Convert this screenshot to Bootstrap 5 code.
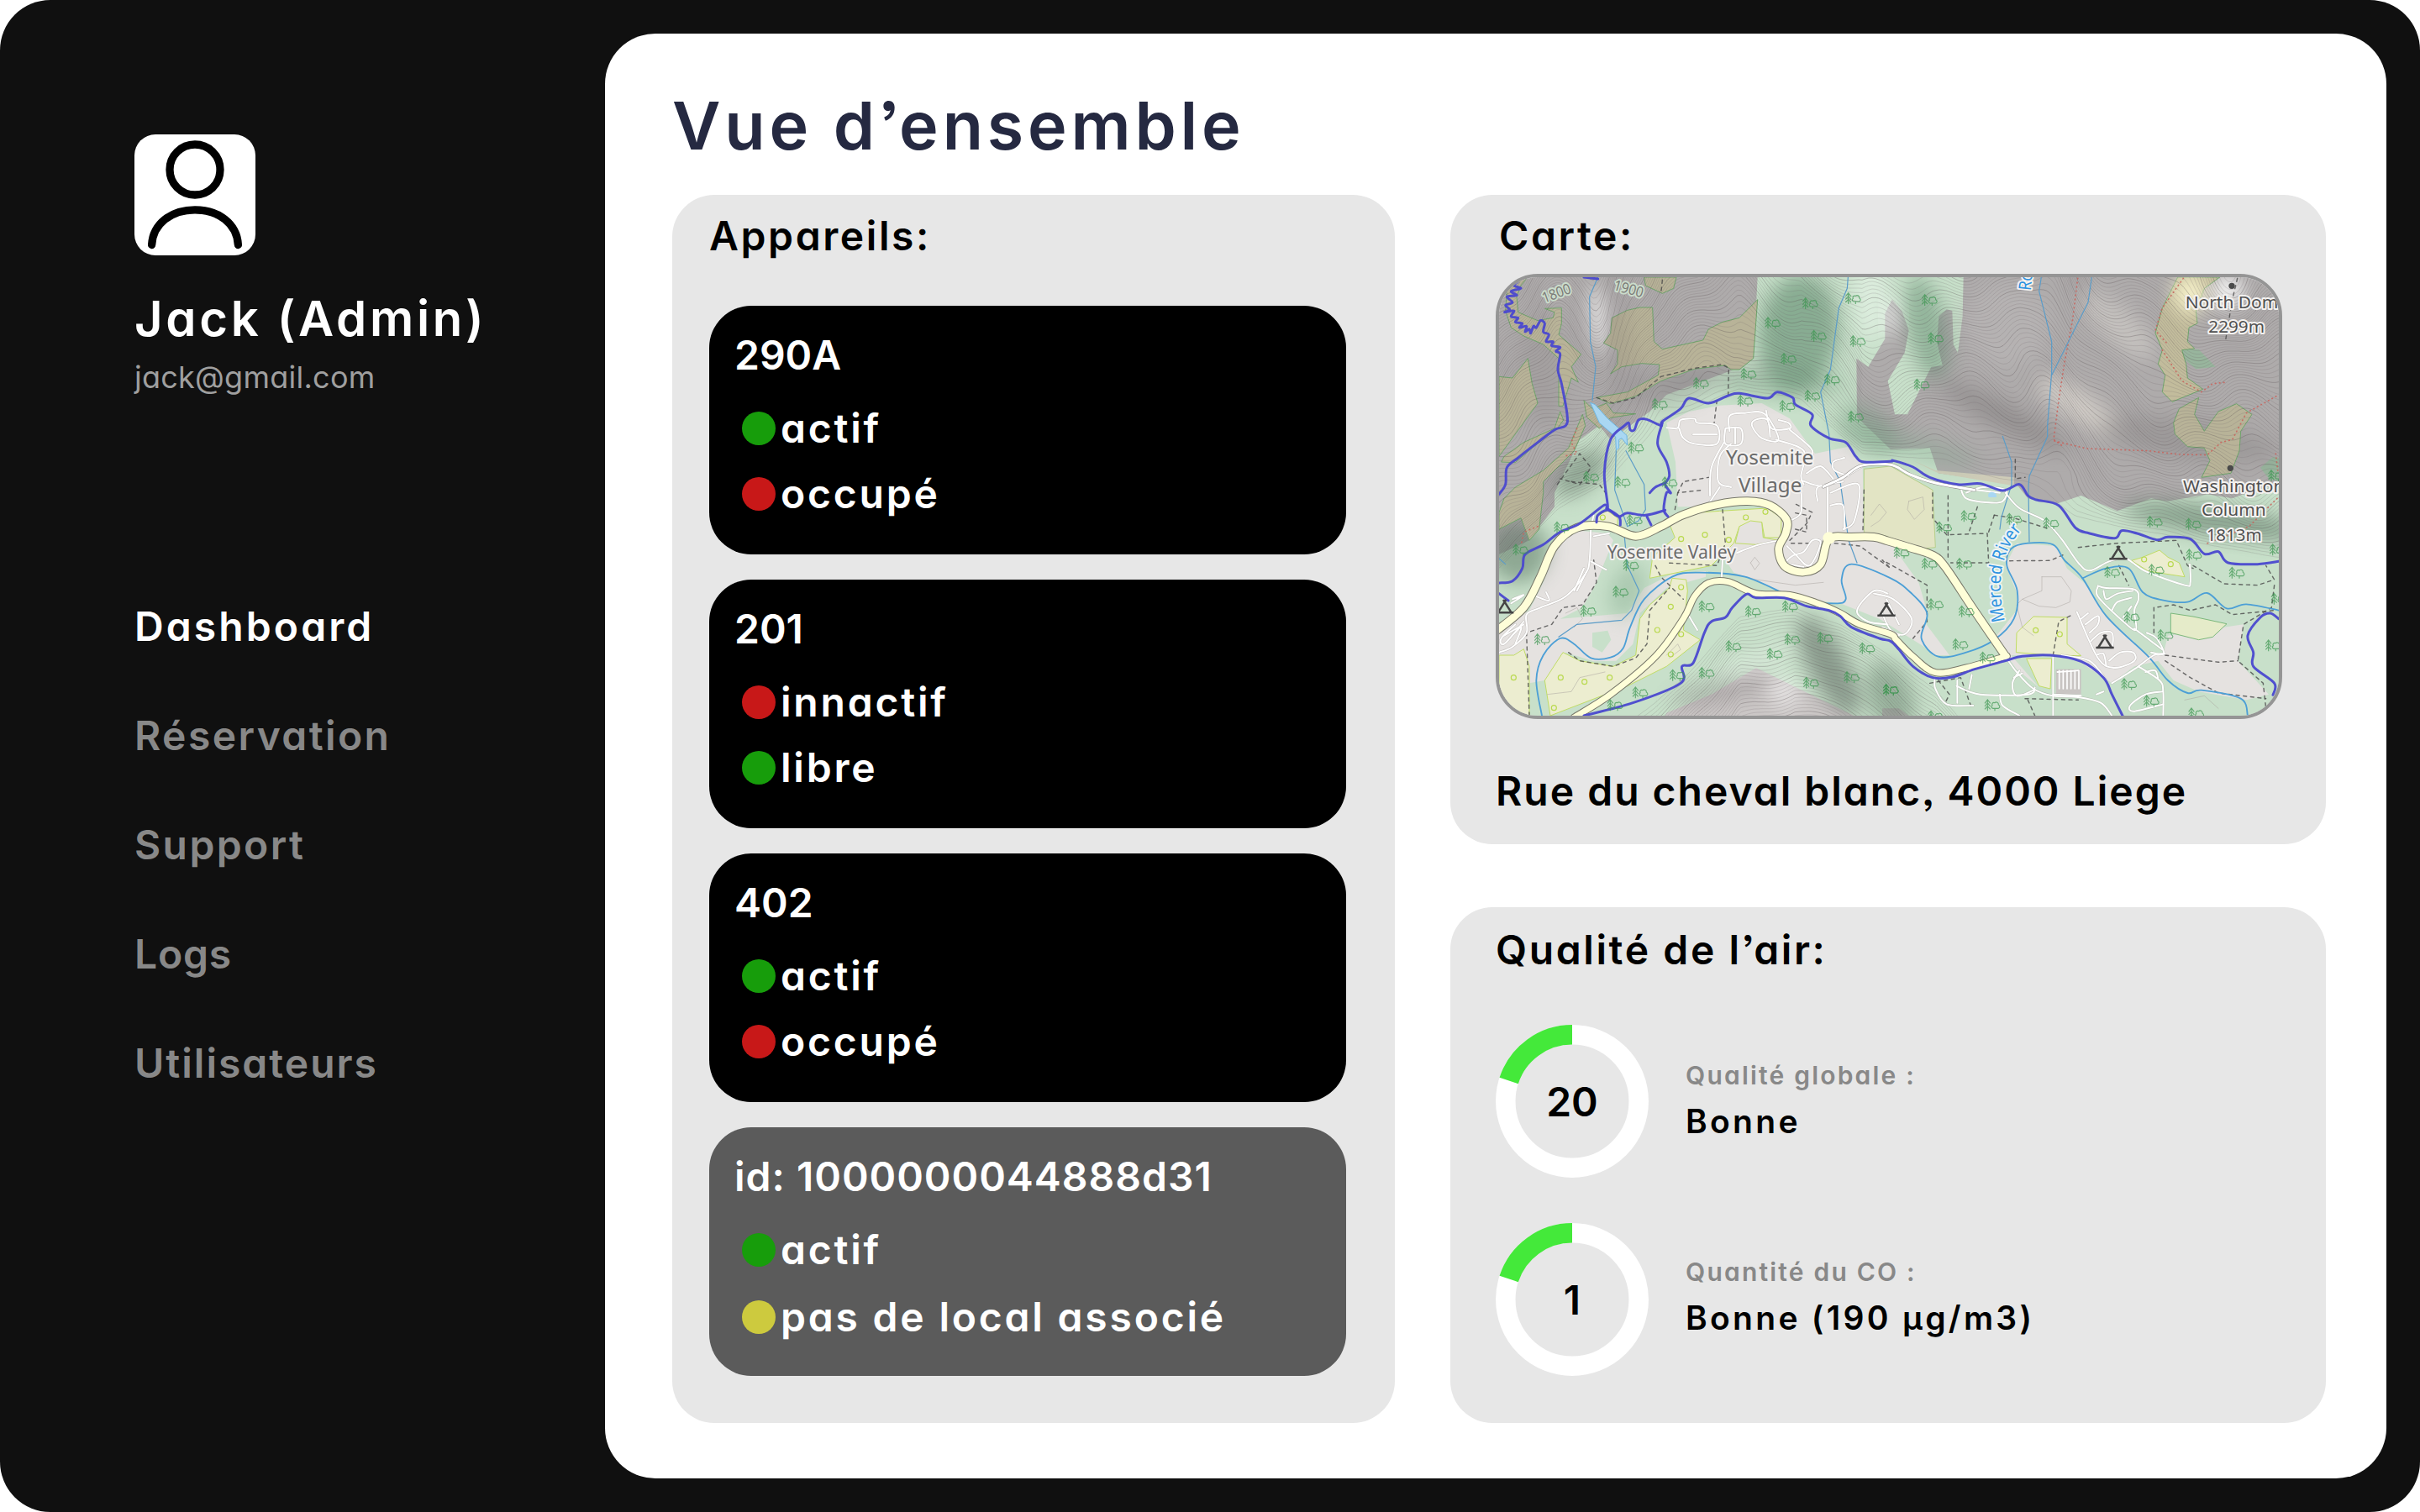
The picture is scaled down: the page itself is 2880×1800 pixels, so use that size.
<!DOCTYPE html>
<html lang="fr">
<head>
<meta charset="utf-8">
<title>Vue d’ensemble</title>
<meta name="viewport" content="width=device-width, initial-scale=1">
<link href="https://cdn.jsdelivr.net/npm/bootstrap@5.3.0/dist/css/bootstrap.min.css" rel="stylesheet">
<style>
body{background:#fff;font-family:Inter,"Open Sans",sans-serif;font-feature-settings:"cv11","ss03";color:#000}
.shell{width:2880px;height:1800px;background:#101010;border-radius:60px;padding-right:40px}
.side{width:720px;padding:160px 0 0 160px}
.avatar{width:144px;height:144px;border-radius:25px;background:#fff}
.who{font-size:58px;line-height:70px;font-weight:600;margin-top:40px;color:#fff;letter-spacing:3.7px}
.mail{font-size:36px;line-height:44px;margin-top:13px;color:#9f9f9f;letter-spacing:.25px}
.side .nav{margin-top:210px}
.side .nav-link{padding:0;font-size:48px;line-height:130px;height:130px;font-weight:600;color:#888;letter-spacing:2.4px}
.side .nav-link.active{color:#fff;letter-spacing:3.1px}
.side .nav-link:nth-child(4){letter-spacing:.8px}
.side .nav-link:nth-child(5){letter-spacing:2px}
.main-pane{width:2120px;height:1720px;border-radius:60px;background:#fff;padding:0 72px 66px 80px}
.page-title{font-size:79px;line-height:90px;font-weight:600;color:#252941;height:192px;padding-top:64px;letter-spacing:4.8px}
.board{height:1462px}
.panel{background:#e7e7e7;border-radius:50px}
.panel h2{font-size:48px;line-height:60px;font-weight:600;margin:0;letter-spacing:2.6px}
.devices{width:860px;padding:19px 58px 0 44px}
.devices h2{margin-bottom:53px}
.device-list{gap:30px}
.device{height:296px;border-radius:50px;background:#000;color:#fff;font-size:48px;line-height:60px;font-weight:600;padding:29px 30px 0}
.device.unset{background:#5b5b5b}
.stat{height:78px;padding-left:9px;gap:6px;letter-spacing:2.8px}
.stat .txt{height:60px;margin-top:-1px}
.device-name{margin-bottom:28px}
.unset .device-name{letter-spacing:1px}
.dot{width:40px;height:40px;border-radius:50%;margin-top:9px}
.ok{background:#179d0b}.ko{background:#c81818}.warn{background:#cdca3e}
.unset .stat+.stat{padding-top:2px}
.right{width:1042px}
.map-panel{height:773px;padding:19px 52px 0 54px}
.map-panel h2{padding-left:4px}
.mapbox{width:936px;height:530px;border:4px solid #959595;border-radius:50px;overflow:hidden;margin-top:15px}
.mapbox svg{display:block;width:928px;height:522px}
.addr{font-size:48px;line-height:60px;font-weight:600;margin-top:56px;letter-spacing:2px}
.air{height:614px;padding:21px 54px 0}
.air h2{margin-bottom:59px}
.ringrow{height:236px;gap:44px}
.ring{width:182px;height:182px}
.ring svg{display:block}
.val{font-size:48px;font-weight:600;line-height:60px;margin-top:1px}
.lbl{font-size:30px;line-height:36px;font-weight:600;color:#888;margin-top:42px;letter-spacing:2.2px}
.ringrow+.ringrow .lbl{margin-top:40px}
.res{font-size:39px;line-height:46px;font-weight:600;margin-top:14px;letter-spacing:3.3px}
.mtxt{font-family:"Noto Sans","Open Sans",sans-serif;paint-order:stroke;stroke:#f4f2f0;stroke-width:12;stroke-linejoin:round}
</style>
</head>
<body>
<div class="shell d-flex align-items-center">
  <aside class="side align-self-start flex-shrink-0">
    <div class="avatar"><svg class="d-block" width="144" height="144" viewBox="0 0 144 144" fill="none" stroke="#000" stroke-width="9.3" stroke-linecap="round"><circle cx="72" cy="42" r="30"/><path d="M20.6 131.5C22 106 44 89.8 72 89.8S122 106 123.4 131.5"/></svg></div>
    <div class="who">Jack (Admin)</div>
    <div class="mail">jack@gmail.com</div>
    <nav class="nav flex-column">
      <a class="nav-link active" href="#">Dashboard</a>
      <a class="nav-link" href="#">Réservation</a>
      <a class="nav-link" href="#">Support</a>
      <a class="nav-link" href="#">Logs</a>
      <a class="nav-link" href="#">Utilisateurs</a>
    </nav>
  </aside>
  <main class="main-pane">
    <h1 class="page-title m-0">Vue d’ensemble</h1>
    <div class="board d-flex justify-content-between align-items-stretch">
      <section class="panel devices">
        <h2>Appareils:</h2>
        <div class="device-list d-flex flex-column">
          <div class="device"><div class="device-name">290A</div>
            <div class="stat d-flex"><i class="dot ok"></i><span class="txt">actif</span></div>
            <div class="stat d-flex"><i class="dot ko"></i><span class="txt">occupé</span></div></div>
          <div class="device"><div class="device-name">201</div>
            <div class="stat d-flex"><i class="dot ko"></i><span class="txt">innactif</span></div>
            <div class="stat d-flex"><i class="dot ok"></i><span class="txt">libre</span></div></div>
          <div class="device"><div class="device-name">402</div>
            <div class="stat d-flex"><i class="dot ok"></i><span class="txt">actif</span></div>
            <div class="stat d-flex"><i class="dot ko"></i><span class="txt">occupé</span></div></div>
          <div class="device unset"><div class="device-name">id: 1000000044888d31</div>
            <div class="stat d-flex"><i class="dot ok"></i><span class="txt">actif</span></div>
            <div class="stat d-flex"><i class="dot warn"></i><span class="txt">pas de local associé</span></div></div>
        </div>
      </section>
      <div class="right d-flex flex-column justify-content-between">
        <section class="panel map-panel">
          <h2>Carte:</h2>
          <div class="mapbox"><svg id="map" viewBox="42 60 2784 1566"></svg></div>
          <div class="addr">Rue du cheval blanc, 4000 Liege</div>
        </section>
        <section class="panel air">
          <h2>Qualité de l’air:</h2>
          <div class="ringrow d-flex">
            <div class="ring position-relative"><svg width="182" height="182" viewBox="0 0 182 182" fill="none" stroke-width="23.5"><circle cx="91" cy="91" r="79.2" stroke="#fff"/><path d="M91 11.8A79.2 79.2 0 0 0 15.7 66.5" stroke="#44e93a"/></svg>
              <div class="val position-absolute top-50 start-50 translate-middle">20</div></div>
            <div><div class="lbl">Qualité globale :</div><div class="res">Bonne</div></div>
          </div>
          <div class="ringrow d-flex">
            <div class="ring position-relative"><svg width="182" height="182" viewBox="0 0 182 182" fill="none" stroke-width="23.5"><circle cx="91" cy="91" r="79.2" stroke="#fff"/><path d="M91 11.8A79.2 79.2 0 0 0 15.7 66.5" stroke="#44e93a"/></svg>
              <div class="val position-absolute top-50 start-50 translate-middle">1</div></div>
            <div><div class="lbl">Quantité du CO :</div><div class="res">Bonne (190 µg/m3)</div></div>
          </div>
        </section>
      </div>
    </div>
  </main>
</div>
<script src="https://cdn.jsdelivr.net/npm/bootstrap@5.3.0/dist/js/bootstrap.bundle.min.js"></script>
<script>
/* Topographic map. Points are written per tile; each tile has an origin. */
const T={1:[0,0],2:[1410,0],3:[0,810],4:[1410,810]};
let out='';
function pts(s){let o=[0,0],r=[];for(const w of s.trim().split(/\s+/)){if(w[0]==='q'){o=T[w[1]];continue}const a=w.split(',').map(Number);r.push([a[0]+o[0],a[1]+o[1]])}return r}
function path(s,smooth,closed){const p=pts(s),n=p.length;let d='M'+p[0];
 if(!smooth)return d+'L'+p.slice(1).join(' ')+(closed?'Z':'');
 const g=i=>closed?p[(i+n)%n]:p[Math.max(0,Math.min(n-1,i))];
 for(let i=0;i<(closed?n:n-1);i++){const a=g(i-1),b=g(i),c=g(i+1),e=g(i+2);
  d+=`C${[b[0]+(c[0]-a[0])/6,b[1]+(c[1]-a[1])/6,c[0]-(e[0]-b[0])/6,c[1]-(e[1]-b[1])/6,c[0],c[1]].map(v=>v.toFixed(1)).join(' ')}`}
 return d+(closed?'Z':'')}
const area=(s,fill,stroke,sm,ex)=>out+=`<path d="${path(s,sm,true)}" fill="${fill}" ${stroke?`stroke="${stroke}" stroke-width="3"`:''} ${ex||''}/>`;
const line=(s,c,w,sm=true,ex='')=>out+=`<path d="${path(s,sm)}" fill="none" stroke="${c}" stroke-width="${w}" stroke-linejoin="round" stroke-linecap="round" ${ex}/>`;
const glow=(x,y,rx,ry,c,o,rot=0)=>out+=`<ellipse cx="${x}" cy="${y}" rx="${rx}" ry="${ry}" fill="${c}" opacity="${o}" transform="rotate(${rot} ${x} ${y})" filter="url(#soft)"/>`;

out+='<defs><filter id="soft" x="-60%" y="-60%" width="220%" height="220%"><feGaussianBlur stdDeviation="34"/></filter><symbol id="tree" viewBox="0 0 60 46" overflow="visible"><path d="M14 44V4M4 17L14 4l10 13M4 28l10-13 10 13M4 38l10-11 10 11M40 44V34M33 35h20c6-3 6-10 0-13 1-8-8-12-13-7-7-3-12 3-9 9-5 3-3 10 2 11" fill="none" stroke="#3c9650" stroke-width="3.5"/></symbol></defs>';
out+='<rect x="42" y="60" width="2784" height="1566" fill="#aeabab"/>';

/* valley forest */
const G='#c8e0ca';
area('42,1050 150,1000 240,880 240,830 330,640 400,590 440,640 580,540 640,480 880,390 950,350 965,60 1700,60 1697,200 1680,330 1664,300 1660,180 1640,175 1612,200 1605,290 1625,375 1585,380 1540,470 1500,550 1455,550 1430,430 1490,330 1505,250 1480,180 1445,140 1420,190 1420,280 1360,380 1318,350 1320,560 1440,675 1580,670 1610,760 1890,800 1930,850 q4 560,50 620,60 710,30 840,85 960,40 1020,50 1160,25 1250,40 1330,10 1416,-10 1416,816 q3 42,816',G);
area('q2 1070,315 1130,318 1190,380 1120,388 1075,350','#98b59d');
area('q2 1350,740 1395,702 1416,705 1416,790 1380,780','#98b59d');

/* pale clearings and built-up ground */
const R='#e5e2e0';
area('640,580 720,540 830,518 980,510 1080,565 1170,690 1290,665 1340,730 1345,985 1440,1010 1540,1150 1572,1260 1560,1340 1640,1400 1560,1380 1400,1280 1260,1225 1100,1205 1000,1160 880,1115 830,1040 890,1000 1030,990 1050,900 960,860 780,880 680,880 672,720',R);
area('q3 330,155 430,165 450,190 390,340 340,430 260,470 500,450 560,360 660,310 780,300 780,320 640,360 545,450 520,560 460,620 380,622 280,590 205,690 150,700 42,810 42,505 150,440 200,340 250,200',R);
area('q3 375,520 430,512 442,545 410,590 375,570',G);
area('q4 440,280 480,200 620,210 660,290 725,345 800,460 950,600 1005,590 1020,530 1290,490 1270,620 1380,740 1300,760 1130,730 1040,690 985,620 900,640 820,700 700,620 600,600 460,600 560,715 480,650 400,540 480,440 482,380',R);
area('q4 150,480 240,600 180,600 140,550',R);
area('q3 640,806 800,740 960,645 1440,880 600,880','#cbc7c6');
area('q4 0,790 60,790 95,816 0,816','#c3bfbe');
area('q4 110,-95 190,-60 470,-35 470,-5 200,-50','#cfccb8');
/* relief shading */
glow(400,210,45,120,'#fff',.5,-8);glow(2110,520,170,50,'#e4dfd6',.65,35);glow(2640,110,60,60,'#fff',.85);glow(1370,120,60,170,'#edf8ee',.55);glow(1450,200,25,70,'#fff',.7);glow(2250,230,170,60,'#dbd8d2',.5,42);glow(1850,230,160,150,'#bdbaba',.5);
glow(1850,560,260,45,'#6e6b6b',.4,28);glow(2500,640,330,70,'#7d7979',.35,8);glow(1110,260,140,210,'#5f8a6d',.6,6);glow(1060,440,230,50,'#5f8a6d',.3,0);glow(1570,240,70,190,'#5f8a6d',.5,-12);glow(1360,600,120,70,'#6f9a7d',.4,40);glow(330,760,110,60,'#5d7363',.5,-40);glow(200,400,90,200,'#7e7a7a',.2);glow(700,450,150,60,'#777',.25,-25);
glow(1220,1450,70,200,'#4f5a52',.5,-28);glow(830,1540,180,40,'#8c8788',.4,-12);glow(950,1440,150,30,'#fff',.3,-20);glow(1060,1540,50,60,'#fff',.5,-30);glow(110,1040,110,110,'#54715d',.5);glow(2600,930,330,50,'#54715d',.55,8);glow(1440,1560,80,130,'#4f6a56',.4,-20);glow(1500,660,260,40,'#7da489',.4,14);glow(500,1180,60,100,'#8fb298',.5,20);glow(740,420,330,30,'#777',.2,-8);

/* scrub */
const K='#b8b398',KS='#6ea56b';
['440,405 465,370 465,320 415,295 440,260 445,205 500,178 545,168 590,168 595,290 625,317 770,285 790,245 840,220 900,205 965,140 950,350 900,390 870,390 850,375 740,388 620,430 530,485 440,512 390,490 500,470 610,410 615,372 550,368 480,380',
'560,60 675,60 665,100 625,118 565,90',
'90,70 140,64 120,90 105,130 110,185 180,215 235,205 240,185 205,172 265,170 265,225 255,265 335,335 300,380 325,435 300,420 270,520 255,520 255,350 200,300 130,270 85,240 65,180 70,110',
'42,415 90,420 145,350 160,440 180,510 42,700',
'260,540 272,570 250,600 160,670 100,722 50,720 60,700 130,650 240,600',
'345,500 375,530 425,510 450,545 530,548 440,562 400,600 355,560',
'42,900 60,850 100,810 200,750 290,670 340,550 350,590 310,680 200,790 q3 200,20 185,150 150,190 120,110 42,150',
'q2 1130,490 1115,550 1150,610 1175,575 1200,540 1265,512 1320,550 1280,610 1275,680 1245,760 1140,775 1170,715 1150,670 1090,665 1045,620 1040,580 1060,530'].forEach(s=>area(s,K,KS));
area('q2 1055,60 1205,60 1150,100 1120,180 1125,225 1095,240 1090,290 1115,315 1070,320 1085,370 1090,420 1145,460 1035,505 1000,470 1010,410 985,370 1000,320 975,260 1000,170','#c2bc9c',KS);
glow(2510,120,60,70,'#fbf6cf',.9);

/* fields and heath */
const H='#ecedd0',HS='#c0dc66';
['q3 650,130 690,95 830,85 1000,75 1050,110 1048,180 990,180 980,125 900,140 880,200 800,280 580,325 590,250 670,180',
'q3 205,690 270,590 330,620 450,640 530,600 545,470 580,420 650,360 660,325 710,330 715,370 700,510 760,545 640,640 500,710 225,816',
'q3 42,600 95,600 130,578 150,640 150,816 42,816',
'q3 390,100 430,85 465,110 465,135 390,125',
'q4 478,590 480,520 540,462 660,465 660,560 710,602 600,600',
'q4 515,612 605,612 600,720 560,710','q4 890,262 930,250 990,225 1020,250 1060,270 1080,320 950,300'].forEach(s=>area(s,H,HS));
area('q3 985,180 980,125 940,120 900,140 885,200 960,205 1040,190',R,HS);
area('1345,745 1440,735 1590,820 q4 190,215 140,220 0,170 q3 1345,170','#e2e4c4','#b7cf8b');
area('q4 1030,450 1110,462 1230,488 1180,535 1130,545 1030,520','#e5ebc9','#7cb87c');
out+='<rect x="2030" y="1460" width="90" height="90" fill="#c9c5c3"/>';

/* contour lines traced over a height field */
(()=>{const rim=[[0,1150],[250,900],[430,800],[620,600],[900,470],[1120,510],[1340,700],[1640,730],[1900,820],[2100,930],[2500,1010],[2900,1090]];
 const south=[[0,2000],[500,1640],[700,1480],[900,1260],[1100,1230],[1260,1290],[1420,1390],[1600,1520],[1750,1700],[2900,2400]];
 const ip=(t,x)=>{for(let i=1;i<t.length;i++)if(x<=t[i][0]){const a=t[i-1],b=t[i];return a[1]+(b[1]-a[1])*(x-a[0])/(b[0]-a[0])}return t[t.length-1][1]};
 const W=(x,y)=>34*Math.sin(x/83+y/140)+22*Math.sin(x/37-y/91)+46*Math.sin(x/190+1);
 const h=(x,y)=>{const a=ip(rim,x)-y,b=y-ip(south,x);
  let v=0;if(a>0)v=a+W(x,y)*Math.min(1,a/160)+130*Math.exp(-((x-2640)**2+(y-130)**2)/26000)+260*Math.exp(-((x-400)**2)/9000)*Math.min(1,a/600)-170*Math.exp(-((x-2010)**2)/14000)*Math.min(1,a/500);
  if(b>0)v=b*1.1+W(x,y)*.4*Math.min(1,b/80);return v};
 const S=12;let thin='',bold='';const f=v=>v.toFixed(0);
 for(let y=60;y<1626;y+=S)for(let x=42;x<2826;x+=S){const c=[[x,y,h(x,y)],[x+S,y,h(x+S,y)],[x+S,y+S,h(x+S,y+S)],[x,y+S,h(x,y+S)]];
  const mn=Math.min(...c.map(k=>k[2])),mx=Math.max(...c.map(k=>k[2]));if(mx<14)continue;
  for(let l=Math.max(1,Math.ceil(mn/14));l*14<mx;l++){const L=l*14,e=[];for(let i=0;i<4;i++){const a=c[i],b=c[(i+1)%4];if((a[2]<L)!==(b[2]<L)){const t=(L-a[2])/(b[2]-a[2]);e.push(f(a[0]+t*(b[0]-a[0]))+' '+f(a[1]+t*(b[1]-a[1])))}}
   if(e.length>1){const d='M'+e[0]+'L'+e[1];if(l%5)thin+=d;else bold+=d}}}
 out+=`<path d="${thin}" stroke="#6b6366" stroke-width="1.8" opacity=".32" fill="none"/><path d="${bold}" stroke="#5a5356" stroke-width="2.4" opacity=".4" fill="none"/>`})();
['q3 940,270 955,250 972,272 955,295 940,270','q4 95,50 145,35 150,80 115,115 90,80 95,50','q4 570,320 640,320 675,370 670,410 620,430 560,425 500,400 570,370 570,320','q4 500,400 480,420 500,500 540,530','q3 280,450 320,430 340,470 310,500','q4 1080,760 1150,745 1200,790','q3 640,600 680,560 690,580 650,610','q3 1370,100 1400,60 1425,90 1400,120 1370,140','q3 880,310 960,330 1100,350 1200,340','q3 215,740 300,730 330,680 420,660'].forEach(s=>line(s,'#a9a39f',2.5,false,'opacity=".6"'));

/* footpaths */
const dash='stroke-dasharray="12 14" opacity=".8"',red='stroke-dasharray="2 13" opacity=".85"';
['390,490 450,510 530,490 620,415 740,385 840,372 862,385 860,480','820,500 810,580','625,70 620,118','250,800 330,690 370,740 330,800 260,780','300,790 400,800 430,840','680,830 700,790 790,775','q3 150,816 140,520 230,490 270,430 340,420 390,340 380,260','q3 290,590 330,620 450,640 530,610 570,560 580,440 650,360','q3 600,280 620,320 700,400','q3 840,80 850,200 820,280 640,270','q3 670,80 680,20 770,10','q3 1080,190 1140,130 1160,90 1100,60','q3 1100,150 1140,160 1140,100 1090,90','q3 1085,200 1160,200','q3 1240,200 1330,210 1440,290 q4 0,260 160,350 160,480 110,540','q3 1345,10 1340,190','q4 180,20 180,110 230,170 375,165 380,270 245,270','q4 235,30 235,250','q4 340,70 310,160','q4 400,100 380,160','q4 400,100 470,110 600,150','q4 455,263 600,262 650,240','q4 700,215 840,200 1050,190 1090,280 1110,290','q4 1110,280 1220,345 1340,350 1400,330 1370,280','q4 845,280 880,350','q4 970,520 970,430 1040,420 1100,440 1190,420 1250,455 1400,440','q4 1400,350 1390,430 1290,490 1270,620 1360,700 1370,790','q4 1010,600 1200,625 1270,620','q4 1010,620 1100,680 1200,735 1370,755','q4 610,600 630,480 680,455','q4 510,755 700,760','q4 170,700 280,680 320,790','q4 200,690 240,740 225,770','q4 520,760 545,816','q2 1268,64 1250,140 1225,290','q2 475,710 475,780 510,775'].forEach(s=>line(s,'#4a4a4a',4.3,false,dash));
['320,600 300,650 320,690 270,700','q3 180,140 130,160 120,210','q2 698,64 680,210 650,370 630,500 612,640 640,660','q2 615,645 730,672 950,680 1060,693 1160,695 1210,650 1250,640 1300,545 1416,480','q2 1075,64 1000,170 975,250 1020,300','q2 1000,320 1070,430 1140,470 1180,440 1230,435','q2 1405,690 1412,750','q4 1410,40 1310,140 1150,205'].forEach(s=>line(s,'#c9625a',5,false,red));

/* water */
const B='#4c9fd6';
['q3 195,816 175,690 200,600 260,540 310,560 370,610 440,608 485,575 510,500 560,400 660,320 750,305 920,320 1110,400 1240,415 1280,400 1265,330 1300,275 1440,325 q4 100,375 160,450 140,540 200,605 300,590 400,545 470,470 482,370 445,280 460,220 520,200 610,205 650,260 715,325 800,460 950,605 1020,690 1090,735 1140,725 1280,755 1305,816','q4 715,325 800,290 880,290 930,375 1000,403 1090,410 1160,378 1230,433 1300,418 1416,440'].forEach(s=>line(s,B,5.5));
['395,60 365,130 368,290 387,380 375,500','1288,60 1285,100 1255,170 1225,390 1190,470 1220,620 1225,720 1260,790 1290,1000 1320,1080','q2 568,60 560,110 605,290 605,400 590,590 590,630 525,770 q4 522,0 525,195','q2 748,60 735,150 700,220 605,410','q2 430,628 462,720 462,800 q4 425,110 420,150','460,680 455,820 q3 500,140 540,120 565,80 q1 560,800 495,680','q3 255,535 320,490 480,475 515,440 542,370 500,280 490,180','q3 42,255 65,275'].forEach(s=>line(s,'#5b9cc8',3.6,false));
area('368,508 385,515 430,565 498,625 500,660 480,635 470,640 470,670 460,678 458,630 400,580','#a9d7f2','#6fb7e3');
/* minor streets */
const st=['640,598 680,598 690,570 740,566 750,580 820,590 820,655 740,655 700,635 685,600','735,622 820,622','865,610 865,555 920,545 990,548 1040,640 980,635 945,590 960,568 1000,570 1010,630','850,600 905,600 905,655 850,655 850,600','885,600 885,655','845,650 800,740 795,840','870,655 830,700 825,790 870,810','995,535 1015,600 1080,600 1075,580 1040,570','1080,605 1155,670 1160,700','1030,640 1130,680 1120,770 1130,800','1140,760 1190,735 1235,780','1275,705 1235,720 1240,750 1290,770','1120,785 1210,805 1340,735','1215,810 q3 1215,160','1225,830 1325,800 1310,930 1270,960','q3 1180,50 1180,0 1270,-20','q3 1225,65 1270,65 1275,150','q3 1080,120 1120,90 1120,0','q3 790,60 830,0','q3 890,235 960,208 1040,190','q3 840,260 836,330','q3 380,100 370,150 365,260 350,310 280,390 190,430 140,455 140,520 90,570 42,590','q3 380,175 435,165','q3 370,265 425,295','q3 345,290 310,370','q3 355,300 320,370','q3 85,415 130,385 90,400 120,390','q3 175,390 220,405 210,375','q3 100,490 50,540 60,560 120,500 100,560','q3 130,480 80,540','q3 60,530 130,490','q3 1070,210 1100,240 1150,280 1190,200 1160,190 1130,230 1090,245 1070,270 1130,285','q3 1430,380 1380,370 1320,440 1360,480 1430,490','q3 720,460 750,510'];
const st4=['q4 -30,380 40,400 105,470 80,525 30,510 0,450','q4 15,400 60,490','q4 0,500 60,530','q4 280,0 300,40 380,55 430,50 440,10 360,0 300,20','q4 300,5 420,20','q4 440,20 490,75 580,120 640,185 700,270 740,298 810,265 870,255 940,300 1080,350 1100,340 1098,275','q4 770,355 770,390 850,470 905,510 900,440 915,400 900,365 800,360 770,352','q4 790,370 800,400 840,380 895,370','q4 820,440 840,410 890,395','q4 860,465 890,425','q4 900,505 1000,580','q4 945,520 980,540 1005,595 960,590','q4 695,445 770,610 830,645 900,620 895,590 850,590 810,620','q4 710,470 735,450','q4 725,490 770,460 770,490 740,520','q4 745,550 780,520 820,520 820,570 790,575','q4 765,600 790,595 800,640','q4 820,700 900,650 970,600 1010,595','q4 440,605 480,660 540,720 610,745 700,750 780,770 820,816','q4 610,600 610,816','q4 610,740 710,745','q4 625,660 700,655','q4 188,680 190,720 230,775 325,780','q4 268,690 268,770','q4 265,710 350,740 520,740 545,715','q4 320,670 310,720','q4 420,740 430,780 490,816','q4 490,655 465,700 480,745 540,725','q4 470,680 500,665','q4 915,640 990,690 1003,730 1003,816','q4 1003,775 900,800 885,780 940,740 1000,730','q4 940,660 975,655 985,685','q4 765,740 790,730','q4 640,600 740,620 800,690'];
[...st,...st4].forEach(s=>line(s,'#a49f9c',8.5,true,'opacity=".5"'));
[...st,...st4].forEach(s=>line(s,'#fff',5.8,true));
line('1200,808 1270,775 1335,733 1440,730 1510,765 1600,795 1740,820','#8f8b88',12);
line('1200,808 1270,775 1335,733 1440,730 1510,765 1600,795 1740,820','#fff',9);
for(let i=0;i<6;i++)line(`q4 ${632+i*14},655 ${632+i*14},720`,'#fff',5,false);
out+='<path d="M1788 838q4-14 18-10t12 18h-28z" fill="#a9d7f2"/>';
/* main roads */
const r=['q3 30,515 130,430 190,320 240,210 320,145 430,140 530,175 620,140 700,98 820,62 930,50 1010,65 1068,115 1065,165 1040,220 1062,282 1130,303 1190,275 1220,185 1300,178 1380,178 1430,192 q4 100,216 180,243 225,285 325,435 440,603','q3 310,822 440,740 600,605 700,470 740,390 790,342 860,338 960,380 1080,385 1180,415 1260,450 1330,490 1440,525 q4 50,545 110,605 190,662 300,645 445,603'];
r.forEach((s,i)=>line(s,'#77776a',i?27:32));r.forEach((s,i)=>line(s,'#fefed8',i?21:26));
out+='<circle cx="1220" cy="992" r="22" fill="#fefed8"/>';
/* park boundary */
const P='#4a48cf';
['345,60 395,66','110,75 95,90 120,100 85,110 105,125 70,130 90,150 65,160 80,175 62,185 95,180 85,200 110,205 100,220 125,225 115,240 140,235 135,255 150,245 155,260 165,235 175,240 190,215 205,225 200,255 220,265 210,290 235,290 230,305 260,310 245,325 260,335 252,390 265,440 285,550 280,590 240,605 180,650 110,705 70,740 65,800 42,835','q3 42,342 90,335 125,290 135,240 200,205 260,160 330,130 415,65 430,70 q1 418,760 440,640 490,590 505,580 510,605 525,605 540,570 570,568 620,590 625,575 690,530 720,492 790,510 860,483 900,475 1000,492 1035,470 1090,490 1100,515 1160,550 1155,590 1220,635 1280,650 1315,700 1345,720 1440,718 q2 40,715 110,738 170,775 270,800 350,797 430,822 490,800 520,840 q4 550,45 630,65 690,145 740,165 830,182 855,155 910,165 980,188 1020,178 1100,185 1150,238 1200,230 1235,270 1340,275 1416,265','625,580 608,655 640,720 650,770 635,800 655,830 q3 640,20 630,80 645,105','q3 580,20 600,0 635,-15','q3 425,75 470,105 475,135','q3 390,125 395,100 430,82 470,105 500,92 565,100 635,82','q3 570,105 585,135','q3 42,380 75,405','q3 345,816 520,770 690,700 695,640 735,628 775,520 800,480 850,465 875,430 925,382 960,395 1060,395 1140,425 1220,440 1260,460 1300,500 1400,540 1440,550 q4 60,580 110,640 180,680 250,678 330,650 440,620 500,604 600,600 710,622 790,680 820,740 858,816','q4 1416,470 1385,450 1350,465 1305,530 1325,590 1325,640 1400,700 1395,742'].forEach(s=>line(s,P,9,true,'opacity=".95"'));

/* vegetation marks */
['1122,130','988,200','1152,246','1045,328','902,382','732,415','1275,112','1292,265','1200,402','1130,460','585,490','890,478','1040,497','1285,535','500,645','340,750','452,768','620,770','q2 138,118','q2 160,255','q2 110,420','q3 235,120','q3 495,95','q3 445,350','q3 330,418','q3 165,520','q3 482,255','q3 752,402','q3 918,420','q3 848,545','q3 1058,520','q3 1175,515','q3 995,572','q3 1325,552','q3 752,640','q3 648,648','q3 515,710','q3 425,755','q3 1125,675','q3 1270,655','q3 1410,700','q3 88,200','q3 1050,402','q4 278,80','q4 440,90','q4 572,105','q4 942,100','q4 1080,108','q4 38,210','q4 138,250','q4 262,250','q4 160,395','q4 270,420','q4 248,538','q4 1235,282','q4 1365,542','q4 1090,785','q4 362,755','q4 0,700','q4 160,795','q4 948,272','q4 790,280','q4 860,440','q4 345,585','q4 850,680','q4 930,740','q4 1380,200','q4 1385,375','q4 1082,218','q4 190,120','q4 980,505','q2 1375,745'].forEach(s=>{const p=pts(s)[0];out+=`<use href="#tree" x="${p[0]}" y="${p[1]}" width="60" height="46" opacity=".7"/>`});
['q3 692,185','q3 777,170','q3 923,108','q3 862,188','q3 692,357','q3 655,427','q3 607,510','q3 692,525','q3 655,597','q3 262,680','q3 347,695','q3 437,680','q3 94,680','q3 238,788','q3 412,108','q3 993,88','q4 548,511','q4 634,525','q4 935,258','q4 1030,275'].forEach(s=>{const p=pts(s)[0];out+=`<circle cx="${p[0]}" cy="${p[1]}" r="9" fill="none" stroke="#b9d94e" stroke-width="3.5"/>`});
['q3 62,430','q3 1425,440','q4 843,238','q4 795,555'].forEach(s=>{const p=pts(s)[0];out+=`<path d="M${p[0]-24} ${p[1]+18}L${p[0]} ${p[1]-20}L${p[0]+24} ${p[1]+18}M${p[0]-32} ${p[1]+18}h64M${p[0]-5} ${p[1]-28}L${p[0]} ${p[1]-20}L${p[0]+5} ${p[1]-28}" fill="none" stroke="#444" stroke-width="7.5"/>`});
out+='<circle cx="2658" cy="91" r="11" fill="#4a4a4a"/><circle cx="2653" cy="742" r="11" fill="#4a4a4a"/>';
/* labels */
const txt=(x,y,w,fs,c,t,ex='')=>out+=`<text class="mtxt" x="${x}" y="${y}" font-size="${fs}" fill="${c}" textLength="${w}" lengthAdjust="spacingAndGlyphs" ${ex}>${t}</text>`;
txt(852,728,313,68,'#6b6b6b','Yosemite');txt(897,827,226,68,'#6b6b6b','Village');txt(428,1066,460,64,'#6b6b6b','Yosemite Valley');
txt(2492,172,332,62,'#505050','North Dom');txt(2575,258,200,62,'#505050','2299m');txt(2484,827,362,62,'#505050','Washington');txt(2550,913,230,62,'#505050','Column');txt(2567,1001,198,62,'#505050','1813m');
txt(203,152,106,52,'#7b7b78','1800','transform="rotate(-20 203 152)" style="stroke:#cbdccb"');txt(448,104,108,52,'#7b7b78','1900','transform="rotate(16 448 104)" style="stroke:#cbdccb"');
txt(1940,109,66,62,'#2f93e0','Ro','transform="rotate(-84 1940 109)"');
out+=`<path id="mr" d="${path('q4 437,478 425,400 425,310 450,220 505,140',true)}" fill="none"/><text class="mtxt" font-size="64" fill="#2f93e0" style="stroke:#eef4f4" ><textPath href="#mr" textLength="348" lengthAdjust="spacingAndGlyphs">Merced River</textPath></text>`;
document.getElementById('map').innerHTML=out;
</script>
</body>
</html>
